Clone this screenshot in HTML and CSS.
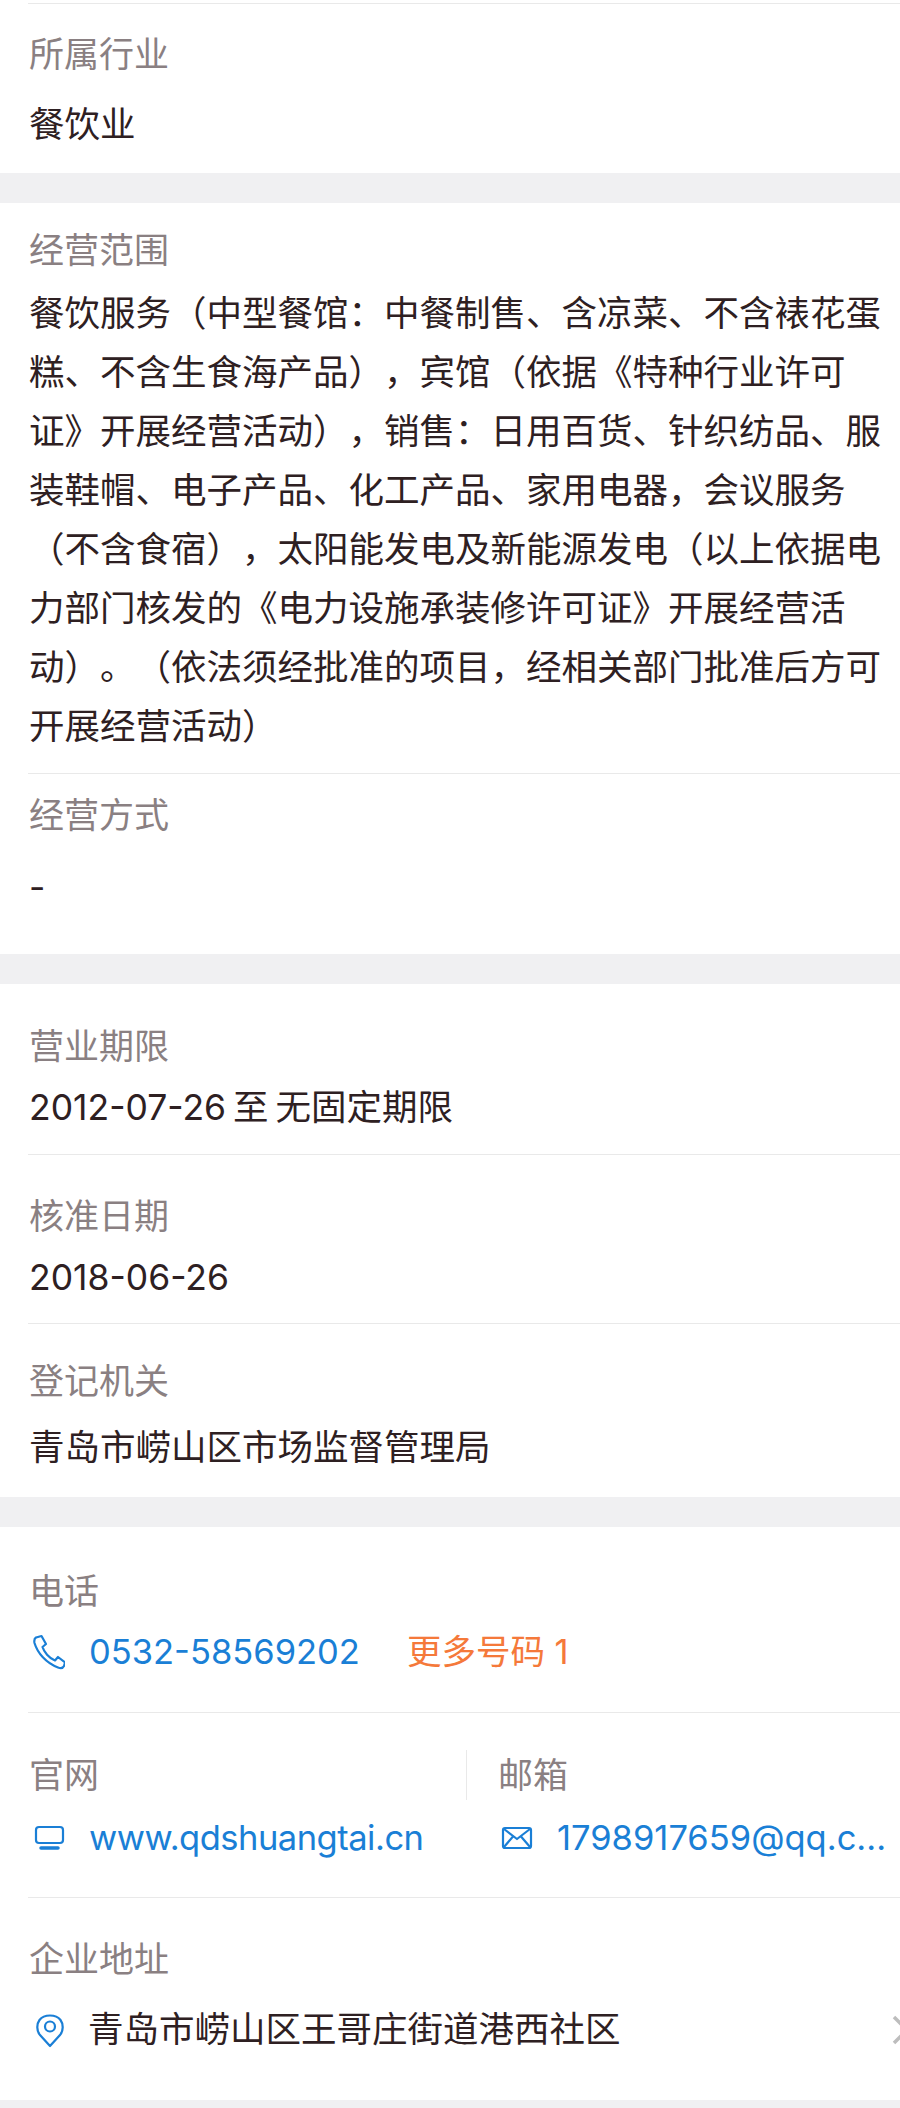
FILE: index.html
```html
<!DOCTYPE html>
<html lang="zh-CN">
<head>
    <meta charset="UTF-8">
    <meta name="viewport" content="width=device-width, initial-scale=1.0">
    <title>企业信息</title>
    <link rel="stylesheet" href="styles.css">
</head>
<body>
    <section class="card card-first">
        <div class="row row-industry">
            <div class="label">所属行业</div>
            <div class="value">餐饮业</div>
        </div>
    </section>

    <section class="card">
        <div class="row row-scope">
            <div class="label">经营范围</div>
            <div class="value">餐饮服务（中型餐馆：中餐制售、含凉菜、不含裱花蛋糕、不含生食海产品），宾馆（依据《特种行业许可证》开展经营活动），销售：日用百货、针织纺品、服装鞋帽、电子产品、化工产品、家用电器，会议服务（不含食宿），太阳能发电及新能源发电（以上依据电力部门核发的《电力设施承装修许可证》开展经营活动）。（依法须经批准的项目，经相关部门批准后方可开展经营活动）</div>
        </div>
        <div class="row row-mode">
            <div class="label">经营方式</div>
            <div class="value">-</div>
        </div>
    </section>

    <section class="card">
        <div class="row row-term">
            <div class="label">营业期限</div>
            <div class="value">2012-07-26 至 无固定期限</div>
        </div>
        <div class="row row-date">
            <div class="label">核准日期</div>
            <div class="value">2018-06-26</div>
        </div>
        <div class="row row-office">
            <div class="label">登记机关</div>
            <div class="value">青岛市崂山区市场监督管理局</div>
        </div>
    </section>

    <section class="card">
        <div class="row row-phone">
            <div class="label">电话</div>
            <div class="value link-line">
                <svg class="icon" viewBox="0 0 36 36" fill="none" stroke="currentColor" stroke-width="2.200" stroke-linejoin="round" stroke-linecap="round">
                    <path d="M7 3.500 L12.500 2 L17 10 L13.500 13 C15 18 20 24 26 26.500 L29 23 L36 28.500 L35 32 C34 34 31.500 34.500 29 33.500 C17 29 8.500 19 5.500 9 C5 6.500 5.500 4.500 7 3.500 Z"/>
                </svg>
                <span class="link">0532-58569202</span>
                <span class="more">更多号码 1</span>
            </div>
        </div>
        <div class="row row-split">
            <div class="half-left">
                <div class="label">官网</div>
                <div class="value link-line">
                    <svg class="icon" viewBox="0 0 36 36" fill="none" stroke="currentColor" stroke-width="2.200" stroke-linecap="round">
                        <rect x="7" y="7" width="27" height="16" rx="3"/>
                        <path d="M12 28 H29" stroke-width="3.500"/>
                    </svg>
                    <span class="link link-web">www.qdshuangtai.cn</span>
                </div>
            </div>
            <div class="half-right">
                <div class="label label-divided">邮箱</div>
                <div class="value link-line">
                    <svg class="icon" viewBox="0 0 36 36" fill="none" stroke="currentColor" stroke-width="2.200" stroke-linejoin="round">
                        <rect x="5" y="8" width="28" height="20" rx="2"/>
                        <path d="M6 9 L19 19 L32 9 M6 27 L15 16.500 M32 27 L23 16.500"/>
                    </svg>
                    <span class="link">1798917659@qq.c...</span>
                </div>
            </div>
        </div>
        <div class="row row-address">
            <div class="label">企业地址</div>
            <div class="value link-line">
                <svg class="icon" viewBox="0 0 36 36" fill="none" stroke="currentColor" stroke-width="2.200" stroke-linejoin="round">
                    <path d="M21 34 L11 23 C7.500 19 7.500 12 10.500 8 C15 2 27 2 31.500 8 C34.500 12 34.500 19 31 23 Z"/>
                    <circle cx="21" cy="14.500" r="5"/>
                </svg>
                <span class="address">青岛市崂山区王哥庄街道港西社区</span>
                <svg class="chevron" viewBox="0 0 16 30" fill="none" stroke="#bdbdbd" stroke-width="3.500">
                    <path d="M2 2 L15 15 L2 28"/>
                </svg>
            </div>
        </div>
    </section>
</body>
</html>
```

FILE: styles.css
```css
body {
    margin: 0;
    background-color: #f0f0f2;
    color: #2e2022;
    font-family: Inter, "Noto Sans CJK SC", sans-serif;
    text-spacing-trim: space-all;
}

.card {
    background-color: white;
    margin-bottom: 30px;
}

.card:last-child {
    margin-bottom: 8px;
}

.card-first {
    padding-top: 3px;
}

.row {
    margin-left: 28px;
    padding-left: 1px;
    border-top: 1px solid #e9e9e9;
}

.card:not(.card-first) > .row:first-child {
    border-top: none;
}

.label {
    font-size: 35px;
    line-height: 44px;
    color: #8a8082;
}

.value {
    margin-top: 10px;
    margin-right: 14px;
    font-size: 35.5px;
    line-height: 59px;
    word-spacing: -3px;
}

/* row paddings, the app's rows are not even */
.row-industry { padding-top: 28px; padding-bottom: 19px; }
.row-industry .value { margin-top: 19px; }
.row-scope { padding-top: 25px; padding-bottom: 17px; }
.row-scope .value { margin-top: 12px; word-spacing: 0; }
.row-mode { padding-top: 19px; padding-bottom: 37px; }
.row-mode .value { margin-top: 21px; }
.row-term { padding-top: 40px; padding-bottom: 17px; }
.row-term .value { margin-top: 10px; }
.row-date { padding-top: 39px; padding-bottom: 16px; }
.row-date .value { margin-top: 10px; }
.row-office { padding-top: 35px; padding-bottom: 20px; }
.row-office .value { margin-top: 15px; }
.row-phone { padding-top: 42px; padding-bottom: 31px; }
.row-phone .value { margin-top: 9px; }
.row-split { padding-top: 40px; padding-bottom: 30px; display: flex; }
.row-split .value { margin-top: 11px; }
.row-address { padding-top: 39px; padding-bottom: 41px; overflow: hidden; }
.row-address .value { margin-top: 19px; }

.link-line {
    display: flex;
    align-items: center;
    font-size: 34.5px;
    margin-right: 0;
    color: #1a7fd6;
}

.icon {
    flex: none;
    width: 36px;
    height: 36px;
    margin-right: 24px;
}

.link-web {
    letter-spacing: -0.5px;
}

.more {
    margin-left: 47px;
    color: #f5793a;
    word-spacing: 0;
}

.half-left {
    width: 437px;
}

.half-right {
    flex: 1;
    min-width: 0;
}

.label-divided {
    border-left: 1px solid #e9e9e9;
    margin: -3px 0 -3px;
    padding: 3px 0 3px 31px;
}

.half-right .link-line {
    margin-left: 32px;
}

.half-right .icon {
    margin-right: 23px;
}

.address {
    flex: 1;
    margin-left: -1px;
    font-size: 35.5px;
    color: #2e2022;
}

.chevron {
    flex: none;
    width: 16px;
    height: 30px;
    margin-right: -8px;
}
```
